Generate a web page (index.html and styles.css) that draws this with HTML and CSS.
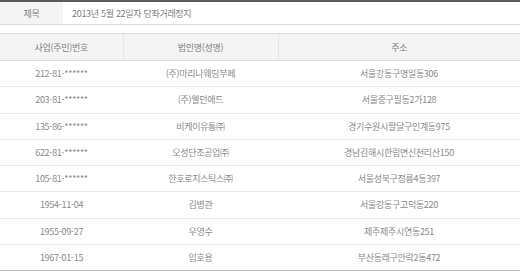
FILE: index.html
```html
<!DOCTYPE html>
<html lang="ko">
<head>
<meta charset="utf-8">
<link rel="stylesheet" href="styles.css">
</head>
<body>
<table class="title">
  <tr>
    <th class="title-label">제목</th>
    <td class="title-value">2013년 5월 22일자 당좌거래정지</td>
  </tr>
</table>
<table class="list">
  <colgroup>
    <col class="c1"><col class="c2"><col class="c3">
  </colgroup>
  <thead>
    <tr><th>사업(주민)번호</th><th>법인명(성명)</th><th>주소</th></tr>
  </thead>
  <tbody>
    <tr><td>212-81-******</td><td>(주)마리나웨딩부페</td><td>서울강동구명일동306</td></tr>
    <tr><td>203-81-******</td><td>(주)웰던애드</td><td>서울중구필동2가128</td></tr>
    <tr><td>135-86-******</td><td>비케이유통㈜</td><td>경기수원시팔달구인계동975</td></tr>
    <tr><td>622-81-******</td><td>오성단조공업㈜</td><td>경남김해시한림면신천리산150</td></tr>
    <tr><td>105-81-******</td><td>한호로지스틱스㈜</td><td>서울성북구정릉4동397</td></tr>
    <tr><td>1954-11-04</td><td>김병관</td><td>서울강동구고덕동220</td></tr>
    <tr><td>1955-09-27</td><td>우영수</td><td>제주제주시연동251</td></tr>
    <tr><td>1967-01-15</td><td>임호용</td><td>부산동래구안락2동472</td></tr>
  </tbody>
</table>
</body>
</html>
```
FILE: styles.css
```css
html, body {
  margin: 0;
  padding: 0;
  background: #fff;
}
body {
  font-family: "Noto Sans CJK KR", "Noto Sans", sans-serif;
  font-size: 9px;
  letter-spacing: -0.3px;
  color: #808080;
}
table {
  border-collapse: collapse;
  width: 520px;
}
.title {
  border-top: 2px solid #5a5a5a;
  border-bottom: 1px solid #dcdcdc;
  margin-bottom: 8px;
}
.title th, .title td {
  height: 22px;
  padding: 0;
  font-weight: normal;
}
.title-label {
  width: 63px;
  background: #f4f4f4;
  text-align: center;
  color: #808080;
}
.title-value {
  text-align: left;
  padding-left: 9px !important;
  color: #808080;
}
.list .c1 { width: 123px; }
.list .c2 { width: 155px; }
.list .c3 { width: 242px; }
.list thead th {
  background: #f4f4f4;
  border-top: 1px solid #dcdcdc;
  border-bottom: 1px solid #dcdcdc;
  border-left: 1px solid #e6e6e6;
  height: 26px;
  padding: 0;
  font-weight: normal;
  text-align: center;
  color: #808080;
}
.list thead th:first-child { border-left: none; }
.list tbody td {
  height: 25.25px;
  padding: 0;
  text-align: center;
  border-bottom: 1px solid #e8e8e8;
  color: #8a8a8a;
}
.list tbody tr:last-child td {
  border-bottom: 1px solid #bdbdbd;
}
```
